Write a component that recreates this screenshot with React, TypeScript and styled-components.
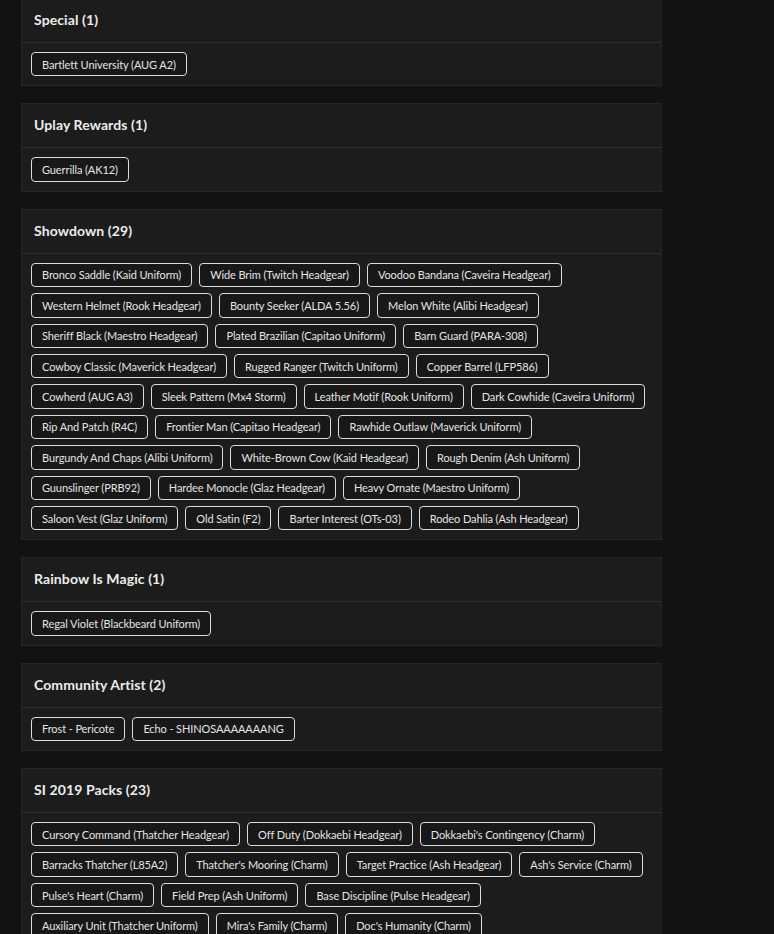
import React from "react";
import styled, { createGlobalStyle } from "styled-components";

const GlobalStyle = createGlobalStyle`
  html, body {
    margin: 0;
    padding: 0;
    background: #121212;
  }
  body {
    font-family: Lato, "Noto Sans", sans-serif;
    color: #e6e6e6;
    overflow: hidden;
  }
`;

const Page = styled.div`
  display: flex;
  flex-direction: column;
  gap: 17px;
  width: 641px;
  margin: -2px 0 0 21px;
`;

const Card = styled.section`
  background: #1c1c1c;
  border: 1px solid #262626;
  box-sizing: border-box;
`;

const Header = styled.div`
  height: 44px;
  box-sizing: border-box;
  display: flex;
  align-items: center;
  padding: 0 12px 2px;
  border-bottom: 1px solid #2f2f2f;
`;

const Title = styled.h3`
  margin: 0;
  font-size: 14px;
  font-weight: 700;
  color: #ececec;
  letter-spacing: 0.1px;
`;

const Body = styled.div`
  display: flex;
  flex-wrap: wrap;
  gap: 6px 7px;
  padding: 9px;
`;

const Chip = styled.span`
  display: inline-flex;
  align-items: center;
  box-sizing: border-box;
  height: 24.4px;
  padding: 0 10px;
  border: 1px solid #dcdcdc;
  border-radius: 4px;
  background: #181818;
  font-size: 11px;
  letter-spacing: -0.1px;
  color: #e4e4e4;
  white-space: nowrap;
`;

const groups: { title: string; items: string[] }[] = [
  { title: "Special (1)", items: ["Bartlett University (AUG A2)"] },
  { title: "Uplay Rewards (1)", items: ["Guerrilla (AK12)"] },
  {
    title: "Showdown (29)",
    items: [
      "Bronco Saddle (Kaid Uniform)",
      "Wide Brim (Twitch Headgear)",
      "Voodoo Bandana (Caveira Headgear)",
      "Western Helmet (Rook Headgear)",
      "Bounty Seeker (ALDA 5.56)",
      "Melon White (Alibi Headgear)",
      "Sheriff Black (Maestro Headgear)",
      "Plated Brazilian (Capitao Uniform)",
      "Barn Guard (PARA-308)",
      "Cowboy Classic (Maverick Headgear)",
      "Rugged Ranger (Twitch Uniform)",
      "Copper Barrel (LFP586)",
      "Cowherd (AUG A3)",
      "Sleek Pattern (Mx4 Storm)",
      "Leather Motif (Rook Uniform)",
      "Dark Cowhide (Caveira Uniform)",
      "Rip And Patch (R4C)",
      "Frontier Man (Capitao Headgear)",
      "Rawhide Outlaw (Maverick Uniform)",
      "Burgundy And Chaps (Alibi Uniform)",
      "White-Brown Cow (Kaid Headgear)",
      "Rough Denim (Ash Uniform)",
      "Guunslinger (PRB92)",
      "Hardee Monocle (Glaz Headgear)",
      "Heavy Ornate (Maestro Uniform)",
      "Saloon Vest (Glaz Uniform)",
      "Old Satin (F2)",
      "Barter Interest (OTs-03)",
      "Rodeo Dahlia (Ash Headgear)",
    ],
  },
  { title: "Rainbow Is Magic (1)", items: ["Regal Violet (Blackbeard Uniform)"] },
  { title: "Community Artist (2)", items: ["Frost - Pericote", "Echo - SHINOSAAAAAAANG"] },
  {
    title: "SI 2019 Packs (23)",
    items: [
      "Cursory Command (Thatcher Headgear)",
      "Off Duty (Dokkaebi Headgear)",
      "Dokkaebi's Contingency (Charm)",
      "Barracks Thatcher (L85A2)",
      "Thatcher's Mooring (Charm)",
      "Target Practice (Ash Headgear)",
      "Ash's Service (Charm)",
      "Pulse's Heart (Charm)",
      "Field Prep (Ash Uniform)",
      "Base Discipline (Pulse Headgear)",
      "Auxiliary Unit (Thatcher Uniform)",
      "Mira's Family (Charm)",
      "Doc's Humanity (Charm)",
      "Dokkaebi's Reserve (Dokkaebi Uniform)",
      "Field Reports (Mira Headgear)",
      "Reserve Duty (Doc Uniform)",
      "Tracker Chip (Pulse Uniform)",
      "Tactical Lens (Mira Uniform)",
      "Steady Hand (Doc Headgear)",
      "Signal Boost (Charm)",
      "Winter Drill (SMG-11)",
      "Patrol Sweep (M590A1)",
      "Stone Breaker (Charm)",
    ],
  },
];

export default function App() {
  return (
    <>
      <GlobalStyle />
      <Page>
        {groups.map((g) => (
          <Card key={g.title}>
            <Header>
              <Title>{g.title}</Title>
            </Header>
            <Body>
              {g.items.map((it) => (
                <Chip key={it}>{it}</Chip>
              ))}
            </Body>
          </Card>
        ))}
      </Page>
    </>
  );
}
